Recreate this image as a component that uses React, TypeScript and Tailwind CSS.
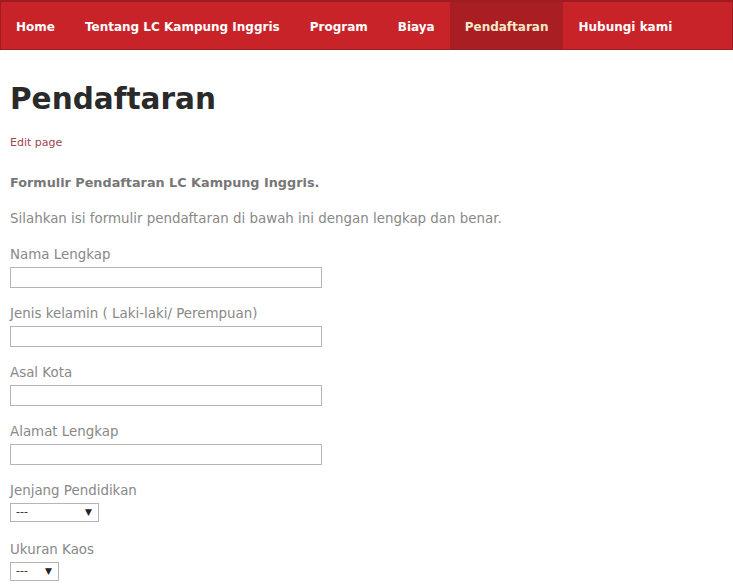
import React from 'react'

const navItems = [
  'Home',
  'Tentang LC Kampung Inggris',
  'Program',
  'Biaya',
  'Pendaftaran',
  'Hubungi kami',
]

const fields = [
  'Nama Lengkap',
  'Jenis kelamin ( Laki-laki/ Perempuan)',
  'Asal Kota',
  'Alamat Lengkap',
]

function Select({ width }: { width: string }) {
  return (
    <div
      className={`${width} mt-[4px] flex h-[19px] items-center justify-between border border-[#b5b5b5] bg-white pl-[5px] pr-[6px] text-[11px] text-[#222]`}
    >
      <span>---</span>
      <span className="text-[9px]">▼</span>
    </div>
  )
}

export default function App() {
  return (
    <div className="min-h-[584px] bg-white font-['DejaVu_Sans',Verdana,sans-serif]">
      <nav className="flex h-[50px] border border-[#9e1b20] border-t-2 bg-[#c9232a]">
        {navItems.map((item) => (
          <a
            key={item}
            className={`flex items-center px-[15px] pt-[2px] text-[12px] font-bold ${
              item === 'Pendaftaran'
                ? 'bg-[#a81e22] text-[#f6e7c9]'
                : 'text-white'
            }`}
          >
            {item}
          </a>
        ))}
      </nav>

      <main className="px-[10px]">
        <h1 className="mt-[31px] text-[29.5px] font-bold leading-[36px] text-[#2a2a2a]">
          Pendaftaran
        </h1>
        <a className="mt-[19px] block text-[11px] leading-[14px] text-[#a0434f]">
          Edit page
        </a>

        <p className="mt-[25px] text-[12.8px] font-bold leading-[16px] text-[#777]">
          Formulir Pendaftaran LC Kampung Inggris.
        </p>
        <p className="mt-[20px] text-[13.4px] leading-[16px] text-[#888]">
          Silahkan isi formulir pendaftaran di bawah ini dengan lengkap dan
          benar.
        </p>

        <div className="mt-[20px] flex flex-col">
          {fields.map((label, i) => (
            <label key={label} className={`block ${i > 0 ? 'mt-[18px]' : ''}`}>
              <span className="block text-[13.4px] leading-[16px] text-[#888]">
                {label}
              </span>
              <input
                type="text"
                className="mt-[4px] block h-[21px] w-[312px] border border-[#b5b5b5] bg-white"
              />
            </label>
          ))}
          <div className="mt-[18px]">
            <span className="block text-[13.4px] leading-[16px] text-[#888]">
              Jenjang Pendidikan
            </span>
            <Select width="w-[89px]" />
          </div>
          <div className="mt-[20px]">
            <span className="block text-[13.4px] leading-[16px] text-[#888]">
              Ukuran Kaos
            </span>
            <Select width="w-[49px]" />
          </div>
        </div>
      </main>
    </div>
  )
}
